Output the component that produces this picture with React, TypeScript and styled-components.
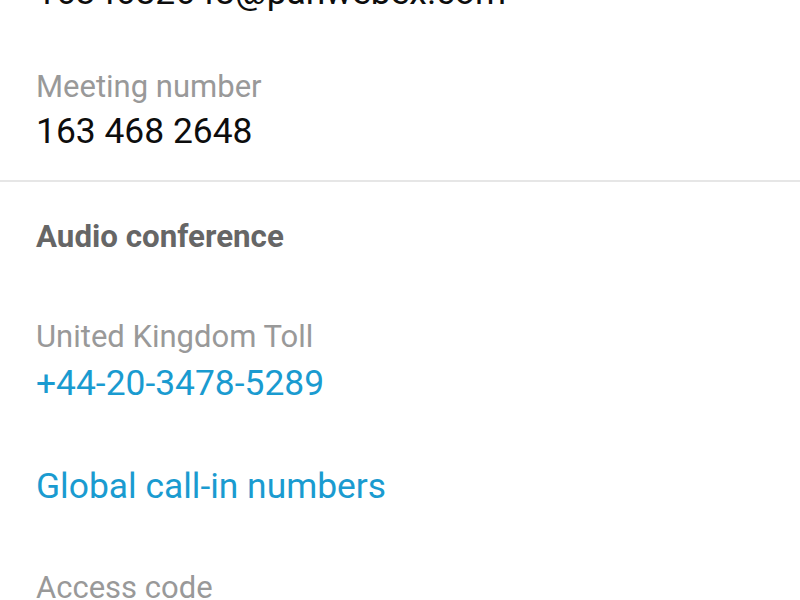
import React from 'react';
import styled, { createGlobalStyle } from 'styled-components';

const GlobalStyle = createGlobalStyle`
  html, body {
    margin: 0;
    padding: 0;
    background: #ffffff;
    overflow: hidden;
  }
  body {
    font-family: Roboto, "Noto Sans", sans-serif;
  }
`;

const Screen = styled.div`
  width: 800px;
  height: 600px;
  overflow: hidden;
  background: #ffffff;
`;

// the list is scrolled a little, so the first row is cut at the top
const Scroller = styled.div`
  margin-top: -31px;
`;

const Section = styled.section<{ $divider?: boolean }>`
  padding: 0 36px ${p => (p.$divider ? 25 : 0)}px;
  border-bottom: ${p => (p.$divider ? '2px solid #e6e6e6' : 'none')};
`;

const Field = styled.div<{ $gap?: number }>`
  padding-top: ${p => p.$gap ?? 0}px;
`;

const Label = styled.div`
  font-size: 31px;
  line-height: 42px;
  color: #999999;
`;

const Value = styled.div`
  font-size: 35.4px;
  line-height: 47px;
  color: #0d0d0d;
`;

const Heading = styled.div`
  font-size: 31.3px;
  font-weight: 700;
  line-height: 44px;
  color: #666666;
`;

const Link = styled.a<{ $gap?: number }>`
  display: block;
  margin-top: ${p => p.$gap ?? 0}px;
  font-size: 35.4px;
  line-height: 46px;
  color: #1a9bd0;
  text-decoration: none;
`;

export default function App() {
  return (
    <Screen>
      <GlobalStyle />
      <Scroller>
        <Section $divider>
          <Value>1634682648@panwebex.com</Value>
          <Field $gap={50}>
            <Label>Meeting number</Label>
            <Value>163 468 2648</Value>
          </Field>
        </Section>
        <Section>
          <Field $gap={33}>
            <Heading>Audio conference</Heading>
          </Field>
          <Field $gap={57}>
            <Label>United Kingdom Toll</Label>
            <Link href="#" $gap={2}>+44-20-3478-5289</Link>
          </Field>
          <Field $gap={57}>
            <Link href="#">Global call-in numbers</Link>
          </Field>
          <Field $gap={58}>
            <Label>Access code</Label>
          </Field>
        </Section>
      </Scroller>
    </Screen>
  );
}
